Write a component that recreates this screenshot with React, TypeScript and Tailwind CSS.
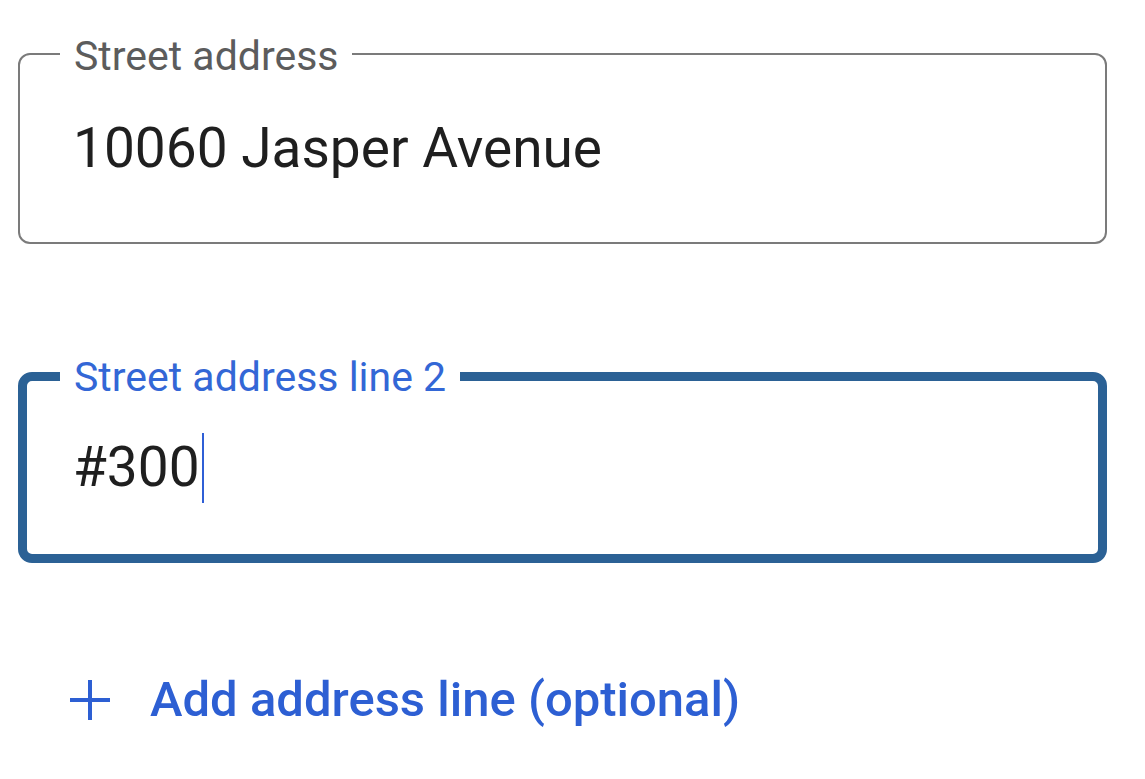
import React from "react";

export default function App() {
  return (
    <div
      className="w-[1145px] h-[779px] bg-white overflow-hidden pl-[18px] pr-[38px] pt-[53px]"
      style={{ fontFamily: "Roboto, 'Noto Sans', sans-serif" }}
    >
      {/* Field 1 */}
      <div className="relative h-[191px] rounded-[12px] border-2 border-[#7b7b7b] flex items-center pl-[53px]">
        <span className="absolute left-[40px] top-[-22px] bg-white px-[14px] text-[41px] leading-[46px] text-[#5c5c5c]">
          Street address
        </span>
        <span className="text-[55px] leading-none text-[#1f1f1f]">10060 Jasper Avenue</span>
      </div>

      {/* Field 2 */}
      <div className="relative mt-[128px] h-[191px] rounded-[14px] border-[9px] border-[#2b6195] flex items-center pl-[46px]">
        <span className="absolute left-[33px] top-[-27px] bg-white px-[14px] text-[41px] leading-[46px] text-[#3367d6]">
          Street address line 2
        </span>
        <span className="text-[55px] leading-none text-[#1f1f1f]">#300</span>
        <span className="ml-[2px] w-[2px] h-[70px] bg-[#2f5fd6]" />
      </div>

      {/* Add line */}
      <div className="mt-[112px] flex items-center pl-[52px] text-[#2d5fd3]">
        <svg width="40" height="40" viewBox="0 0 40 40" className="shrink-0">
          <path d="M20 0v40M0 20h40" stroke="currentColor" strokeWidth="4" />
        </svg>
        <span className="ml-[40px] text-[49px] leading-none font-medium">Add address line (optional)</span>
      </div>
    </div>
  );
}
